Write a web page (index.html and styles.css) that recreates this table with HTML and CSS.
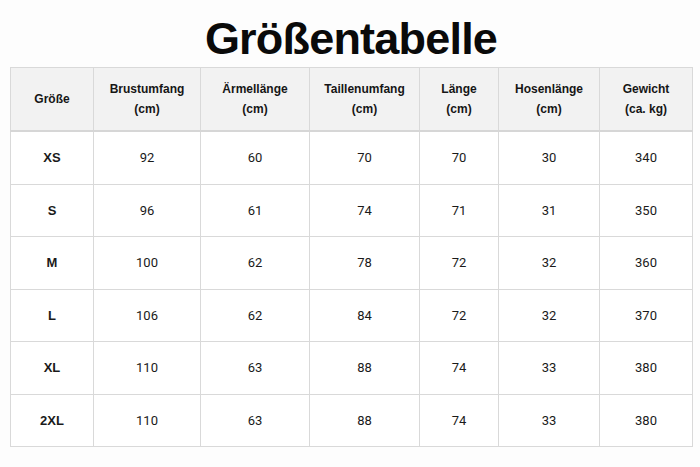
FILE: index.html
```html
<!DOCTYPE html>
<html lang="de">
<head>
<meta charset="utf-8">
<title>Größentabelle</title>
<link rel="stylesheet" href="styles.css">
</head>
<body>
<main class="page">
  <h1 class="title">Größentabelle</h1>
  <table class="sizes">
    <colgroup>
      <col class="c1"><col class="c2"><col class="c3"><col class="c4"><col class="c5"><col class="c6"><col class="c7">
    </colgroup>
    <thead>
      <tr>
        <th>Größe</th>
        <th>Brustumfang<br>(cm)</th>
        <th>Ärmellänge<br>(cm)</th>
        <th>Taillenumfang<br>(cm)</th>
        <th>Länge<br>(cm)</th>
        <th>Hosenlänge<br>(cm)</th>
        <th>Gewicht<br>(ca. kg)</th>
      </tr>
    </thead>
    <tbody>
      <tr><th>XS</th><td>92</td><td>60</td><td>70</td><td>70</td><td>30</td><td>340</td></tr>
      <tr><th>S</th><td>96</td><td>61</td><td>74</td><td>71</td><td>31</td><td>350</td></tr>
      <tr><th>M</th><td>100</td><td>62</td><td>78</td><td>72</td><td>32</td><td>360</td></tr>
      <tr><th>L</th><td>106</td><td>62</td><td>84</td><td>72</td><td>32</td><td>370</td></tr>
      <tr><th>XL</th><td>110</td><td>63</td><td>88</td><td>74</td><td>33</td><td>380</td></tr>
      <tr><th>2XL</th><td>110</td><td>63</td><td>88</td><td>74</td><td>33</td><td>380</td></tr>
    </tbody>
  </table>
</main>
</body>
</html>
```

FILE: styles.css
```css
html, body {
  margin: 0;
  padding: 0;
  background: #fdfdfd;
}
body {
  font-family: "Liberation Sans", Arial, sans-serif;
  color: #111;
}
.page {
  width: 700px;
  height: 467px;
  padding: 10px 8px 0 10px;
  box-sizing: border-box;
}
.title {
  margin: 0;
  height: 57px;
  text-align: center;
  font-size: 45px;
  line-height: 57px;
  font-weight: 700;
  letter-spacing: -0.8px;
  color: #0a0a0a;
}
.sizes {
  border-collapse: collapse;
  table-layout: fixed;
  width: 682px;
  background: #fff;
}
.c1 { width: 83px; }
.c2 { width: 107px; }
.c3 { width: 109px; }
.c4 { width: 110px; }
.c5 { width: 79px; }
.c6 { width: 101px; }
.c7 { width: 93px; }
.sizes th, .sizes td {
  border: 1px solid #d9d9d9;
  text-align: center;
  vertical-align: middle;
  padding: 0;
}
.sizes thead th {
  background: #f2f2f2;
  height: 62px;
  font-size: 12px;
  line-height: 20px;
  font-weight: 700;
  color: #161616;
  border-bottom: 2px solid #d6d6d6;
}
.sizes tbody th, .sizes tbody td {
  height: 51.5px;
  font-size: 13px;
  color: #1a1a1a;
}
.sizes tbody th {
  font-weight: 700;
}
.sizes tbody td {
  font-family: Roboto, "Liberation Sans", sans-serif;
  font-weight: 400;
}
```
